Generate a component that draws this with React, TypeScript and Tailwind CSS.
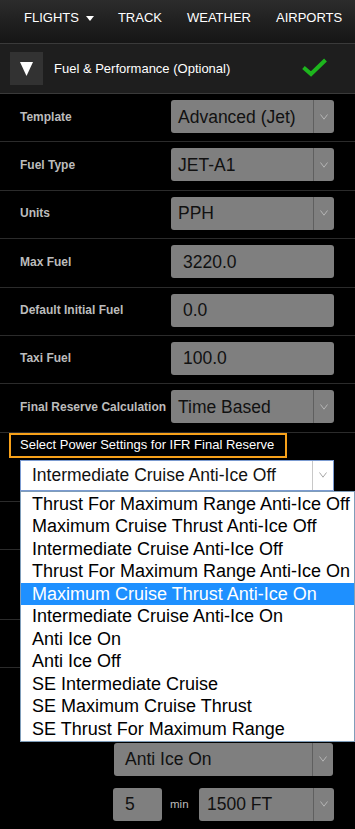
import React from "react";

const Chevron = ({ color = "#b4b4b4" }: { color?: string }) => (
  <svg width="8" height="6" viewBox="0 0 8 6">
    <polyline points="0.5,0.5 4,5.2 7.5,0.5" fill="none" stroke={color} strokeWidth="1" />
  </svg>
);

const GreySelect = ({ value, className = "", pad = "pl-[7px]" }: { value: string; className?: string; pad?: string }) => (
  <div className={`flex h-[33px] items-center rounded-[3px] bg-[#7f7f7f] ${className}`}>
    <span className={`flex-1 whitespace-nowrap ${pad} text-[17.5px] leading-[20px] text-[#111]`}>{value}</span>
    <div className="flex h-full w-[21px] items-center justify-center border-l border-[#5f5f5f]">
      <Chevron />
    </div>
  </div>
);

const GreyInput = ({ value, className = "" }: { value: string; className?: string }) => (
  <div className={`flex h-[33px] items-center rounded-[3px] bg-[#7f7f7f] pl-[12px] text-[17.5px] leading-[20px] text-[#111] ${className}`}>
    {value}
  </div>
);

type Row = { label: string; value: string; kind: "select" | "input" };

const rows: Row[] = [
  { label: "Template", value: "Advanced (Jet)", kind: "select" },
  { label: "Fuel Type", value: "JET-A1", kind: "select" },
  { label: "Units", value: "PPH", kind: "select" },
  { label: "Max Fuel", value: "3220.0", kind: "input" },
  { label: "Default Initial Fuel", value: "0.0", kind: "input" },
  { label: "Taxi Fuel", value: "100.0", kind: "input" },
  { label: "Final Reserve Calculation", value: "Time Based", kind: "select" },
];

const options = [
  "Thrust For Maximum Range Anti-Ice Off",
  "Maximum Cruise Thrust Anti-Ice Off",
  "Intermediate Cruise Anti-Ice Off",
  "Thrust For Maximum Range Anti-Ice On",
  "Maximum Cruise Thrust Anti-Ice On",
  "Intermediate Cruise Anti-Ice On",
  "Anti Ice On",
  "Anti Ice Off",
  "SE Intermediate Cruise",
  "SE Maximum Cruise Thrust",
  "SE Thrust For Maximum Range",
];

export default function App() {
  return (
    <div className="h-[829px] w-[355px] overflow-hidden bg-black font-['Liberation_Sans',Arial,sans-serif]">
      {/* top nav */}
      <div className="flex h-[43px] items-start bg-gradient-to-b from-[#2c2c2c] to-[#151515] pl-[24px] pt-[10px] text-[13px] leading-[16px] text-white">
        <span>FLIGHTS</span>
        <span className="ml-[7px] mt-[6px] h-0 w-0 border-l-[4px] border-r-[4px] border-t-[5px] border-l-transparent border-r-transparent border-t-white" />
        <span className="ml-[24px]">TRACK</span>
        <span className="ml-[25px]">WEATHER</span>
        <span className="ml-[25px]">AIRPORTS</span>
      </div>

      {/* section header */}
      <div className="flex h-[51px] items-start border-y border-[#3a3a3a] bg-[#1e1e1e] pl-[10px] pt-[8px]">
        <div className="flex h-[33px] w-[33px] items-center justify-center bg-[#323232]">
          <svg width="13" height="14" viewBox="0 0 13 14">
            <polygon points="0,0 13,0 6.5,14" fill="#fff" />
          </svg>
        </div>
        <span className="ml-[11px] mt-[9px] text-[13px] leading-[16px] text-white">Fuel &amp; Performance (Optional)</span>
        <svg className="ml-[71px] mt-[5px]" width="27" height="21" viewBox="0 0 27 21">
          <path d="M2.5 10.5 L10 17 L24.5 3" fill="none" stroke="#1db51d" strokeWidth="4" />
        </svg>
      </div>

      {/* form rows */}
      {rows.map((r) => (
        <div key={r.label} className="flex h-[48.4px] border-b border-[#2b2b2b] pl-[20px] pt-[6px]">
          <div className="flex h-[33px] w-[151px] items-center text-[12px] font-bold text-[#bcbcbc]">{r.label}</div>
          {r.kind === "select" ? (
            <GreySelect value={r.value} className="w-[163px]" />
          ) : (
            <GreyInput value={r.value} className="w-[163px]" />
          )}
        </div>
      ))}

      {/* power settings */}
      <div className="pl-[9px]">
        <div className="flex h-[25px] w-[278px] items-center border-2 border-[#f7a11a] pl-[9px] text-[13px] text-white">
          Select Power Settings for IFR Final Reserve
        </div>
      </div>
      <div className="relative z-10 ml-[20px] mt-[2px] flex h-[31px] w-[314px] items-center border border-[#7b9bd1] bg-white">
        <span className="flex-1 pl-[11px] text-[17.5px] leading-[20px] text-[#111]">Intermediate Cruise Anti-Ice Off</span>
        <div className="flex h-full w-[21px] items-center justify-center border-l border-[#c8c8c8]">
          <Chevron color="#a8a8a8" />
        </div>
        <div className="absolute left-[-1px] top-[30px] w-[335px] border border-[#7f9db9] bg-white py-[1px]">
          {options.map((o, i) => (
            <div
              key={o}
              className={`h-[22.5px] whitespace-nowrap pl-[11px] text-[18px] leading-[22.5px] ${
                i === 4 ? "bg-[#1e90ff] text-white" : "text-black"
              }`}
            >
              {o}
            </div>
          ))}
        </div>
      </div>

      {/* rows hidden behind the list */}
      <div className="h-[11px] border-b border-[#2b2b2b]" />
      <div className="h-[48px] border-b border-[#2b2b2b]" />
      <div className="h-[70px] border-b border-[#2b2b2b]" />
      <div className="h-[48px] border-b border-[#2b2b2b]" />
      <div className="h-[75px]" />

      <GreySelect value="Anti Ice On" className="ml-[114px] w-[219px]" pad="pl-[11px]" />
      <div className="mt-[12px] flex items-center pl-[113px]">
        <GreyInput value="5" className="w-[49px]" />
        <span className="ml-[8px] w-[29px] text-[11.5px] text-[#bcbcbc]">min</span>
        <GreySelect value="1500 FT" className="w-[135px]" pad="pl-[8px]" />
      </div>
    </div>
  );
}
